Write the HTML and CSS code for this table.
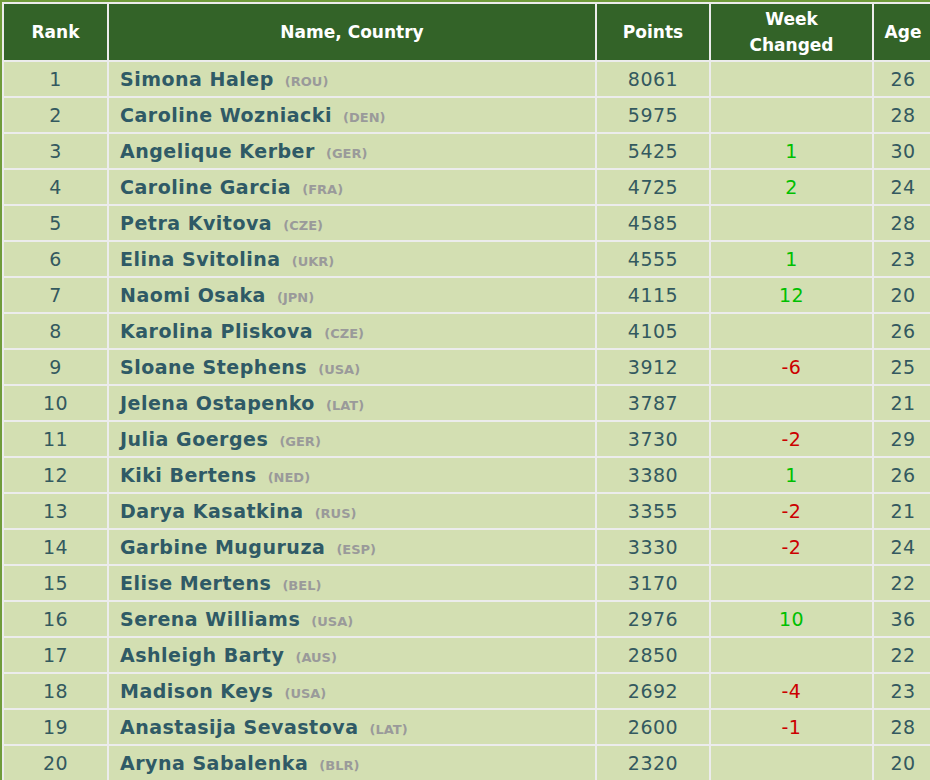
FILE: index.html
```html
<!DOCTYPE html>
<html>
<head>
<meta charset="utf-8">
<link rel="stylesheet" href="styles.css">
</head>
<body>
<table class="rank-table">
  <thead>
    <tr>
      <th class="c-rank">Rank</th>
      <th class="c-name">Name, Country</th>
      <th class="c-points">Points</th>
      <th class="c-week">Week<br>Changed</th>
      <th class="c-age">Age</th>
    </tr>
  </thead>
  <tbody>
    <tr><td>1</td><td class="name">Simona Halep <span class="cc">(ROU)</span></td><td>8061</td><td></td><td>26</td></tr>
    <tr><td>2</td><td class="name">Caroline Wozniacki <span class="cc">(DEN)</span></td><td>5975</td><td></td><td>28</td></tr>
    <tr><td>3</td><td class="name">Angelique Kerber <span class="cc">(GER)</span></td><td>5425</td><td class="up">1</td><td>30</td></tr>
    <tr><td>4</td><td class="name">Caroline Garcia <span class="cc">(FRA)</span></td><td>4725</td><td class="up">2</td><td>24</td></tr>
    <tr><td>5</td><td class="name">Petra Kvitova <span class="cc">(CZE)</span></td><td>4585</td><td></td><td>28</td></tr>
    <tr><td>6</td><td class="name">Elina Svitolina <span class="cc">(UKR)</span></td><td>4555</td><td class="up">1</td><td>23</td></tr>
    <tr><td>7</td><td class="name">Naomi Osaka <span class="cc">(JPN)</span></td><td>4115</td><td class="up">12</td><td>20</td></tr>
    <tr><td>8</td><td class="name">Karolina Pliskova <span class="cc">(CZE)</span></td><td>4105</td><td></td><td>26</td></tr>
    <tr><td>9</td><td class="name">Sloane Stephens <span class="cc">(USA)</span></td><td>3912</td><td class="down">-6</td><td>25</td></tr>
    <tr><td>10</td><td class="name">Jelena Ostapenko <span class="cc">(LAT)</span></td><td>3787</td><td></td><td>21</td></tr>
    <tr><td>11</td><td class="name">Julia Goerges <span class="cc">(GER)</span></td><td>3730</td><td class="down">-2</td><td>29</td></tr>
    <tr><td>12</td><td class="name">Kiki Bertens <span class="cc">(NED)</span></td><td>3380</td><td class="up">1</td><td>26</td></tr>
    <tr><td>13</td><td class="name">Darya Kasatkina <span class="cc">(RUS)</span></td><td>3355</td><td class="down">-2</td><td>21</td></tr>
    <tr><td>14</td><td class="name">Garbine Muguruza <span class="cc">(ESP)</span></td><td>3330</td><td class="down">-2</td><td>24</td></tr>
    <tr><td>15</td><td class="name">Elise Mertens <span class="cc">(BEL)</span></td><td>3170</td><td></td><td>22</td></tr>
    <tr><td>16</td><td class="name">Serena Williams <span class="cc">(USA)</span></td><td>2976</td><td class="up">10</td><td>36</td></tr>
    <tr><td>17</td><td class="name">Ashleigh Barty <span class="cc">(AUS)</span></td><td>2850</td><td></td><td>22</td></tr>
    <tr><td>18</td><td class="name">Madison Keys <span class="cc">(USA)</span></td><td>2692</td><td class="down">-4</td><td>23</td></tr>
    <tr><td>19</td><td class="name">Anastasija Sevastova <span class="cc">(LAT)</span></td><td>2600</td><td class="down">-1</td><td>28</td></tr>
    <tr><td>20</td><td class="name">Aryna Sabalenka <span class="cc">(BLR)</span></td><td>2320</td><td></td><td>20</td></tr>
  </tbody>
</table>
</body>
</html>
```
FILE: styles.css
```css
html, body {
  margin: 0;
  padding: 0;
  overflow: hidden;
  background: #ffffff;
}
.rank-table {
  border: 2px solid #6f9b3b;
  border-spacing: 2px;
  background: #ececec;
  font-family: "DejaVu Sans", Verdana, sans-serif;
  table-layout: fixed;
  width: 936px;
}
.rank-table th {
  background: #336328;
  color: #ffffff;
  font-size: 17px;
  font-weight: bold;
  line-height: 26px;
  height: 56px;
  padding: 0;
  text-align: center;
  vertical-align: middle;
}
.c-rank { width: 103px; }
.c-name { width: 486px; }
.c-points { width: 112px; }
.c-week { width: 161px; }
.c-age { width: 58px; }
.rank-table td {
  background: #d3dfb2;
  color: #33595f;
  font-size: 19px;
  letter-spacing: 0.5px;
  height: 34px;
  padding: 0;
  text-align: center;
  vertical-align: middle;
  white-space: nowrap;
}
.rank-table td.name {
  text-align: left;
  padding-left: 11px;
  font-weight: bold;
  color: #2f5a66;
}
.cc {
  font-size: 13px;
  letter-spacing: 0;
  color: #9a9a9a;
  margin-left: 4px;
}
.rank-table td.up { color: #00c000; }
.rank-table td.down { color: #cc0000; }
```
